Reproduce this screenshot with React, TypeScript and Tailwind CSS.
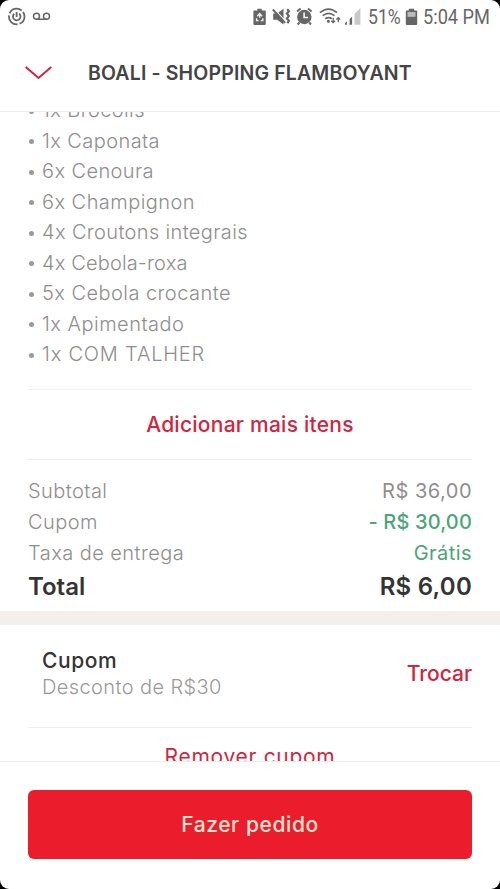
import type { ReactNode } from "react";

const items = [
  { label: "1x Brócolis", spacing: "tracking-[0.4px]" },
  { label: "1x Caponata", spacing: "tracking-[0.42px]" },
  { label: "6x Cenoura", spacing: "tracking-[0.4px]" },
  { label: "6x Champignon", spacing: "tracking-[0.45px]" },
  { label: "4x Croutons integrais", spacing: "tracking-[0.36px]" },
  { label: "4x Cebola-roxa", spacing: "tracking-[0.15px]" },
  { label: "5x Cebola crocante", spacing: "tracking-[0.45px]" },
  { label: "1x Apimentado", spacing: "tracking-[0.48px]" },
  { label: "1x COM TALHER", spacing: "tracking-[0.8px]" },
];

function StatusBar() {
  return (
    <div className="flex h-[34px] shrink-0 items-center text-[#666]">
      <svg width="60" height="34" viewBox="0 0 60 34" fill="none" stroke="#666">
        <circle cx="16.7" cy="16.5" r="7.8" strokeWidth="1.8" strokeDasharray="14.3 2" strokeDashoffset="5" />
        <path d="M14.2 13.7a3.8 3.8 0 1 0 5 0M16.6 12v5" strokeWidth="1.8" />
        <circle cx="36.5" cy="16.3" r="3" strokeWidth="1.5" />
        <circle cx="46.5" cy="16.3" r="3" strokeWidth="1.5" />
        <path d="M36.5 19.3h10" strokeWidth="1.5" />
      </svg>
      <svg className="ml-[190px] shrink-0" width="112" height="34" viewBox="250 0 112 34" fill="#666">
        {/* battery saver */}
        <path d="M257.3 8.8h4.4v1.7h3.3q.8 0 .8.8v12.8q0 .8-.8.8h-10.8q-.8 0-.8-.8V11.3q0-.8.8-.8h3.1z" />
        <path d="M257.3 16.3l2.4-2.8 2.4 2.8M256.6 18.2v2.4h2M262.8 18.2v2.4h-2M259.7 14.5v3.2" fill="none" stroke="#eee" strokeWidth="1.4" />
        {/* muted, vibrating */}
        <path d="M273.2 13.5h4l6.3-4.7v15.6l-6.3-4.6h-4z" />
        <path d="M273.5 8.5l12 12.6" stroke="#fff" strokeWidth="1.3" />
        <path d="M272.8 9.5l12.4 13.3" stroke="#666" strokeWidth="1.9" />
        <path d="M287.2 9.3l1.7 1.9-2 2.4 2 2.4-2 2.4 2 2.4-1.4 2.4" fill="none" stroke="#666" strokeWidth="2.2" />
        {/* alarm */}
        <circle cx="304.3" cy="17" r="7.2" />
        <path d="M297 11.4l3.6-3M308 8.4l3.6 3M299.5 22.5l-1.8 2M309.2 22.5l1.8 2" stroke="#666" strokeWidth="1.9" />
        <path d="M304.1 12.5v5h4" fill="none" stroke="#fff" strokeWidth="1.5" />
        {/* wifi */}
        <g fill="none" stroke="#666" strokeWidth="1.7">
          <path d="M320 12.7q8.5-7.3 17 0M322.7 15.7q5.8-4.7 11.8 0M325.3 18.8q3.2-2.4 6.5 0" />
          <path d="M333.2 17.8v4.5M331.3 20.7l1.9 1.9 1.9-1.9M338.3 22.3v-4.5M336.4 19.5l1.9-1.9 1.9 1.9" strokeWidth="1.3" />
        </g>
        <circle cx="328.4" cy="21.2" r="1.5" />
        {/* signal */}
        <path d="M345 23l1.9-1.4v3.1H345zM349.6 19l2.5-2.2v7.9h-2.5z" />
        <path d="M354.5 14l5.9-6v16.7h-5.9z" fill="#c8c8c8" />
      </svg>
      <span className="ml-[6px] w-[36px] origin-left scale-x-[0.88] font-[Roboto,sans-serif] text-[20px] leading-none">51%</span>
      <svg className="ml-[1px] shrink-0" width="13" height="34" viewBox="405 0 13 34" fill="#666">
        <path d="M408.8 8.7h5.3v1.8h2.3q.8 0 .8.8v12.8q0 .8-.8.8h-9.8q-.8 0-.8-.8V11.3q0-.8.8-.8h2.2z" />
        <path d="M407.5 12h8v4.8h-8z" fill="#bbb" />
      </svg>
      <span className="ml-[5px] origin-left scale-x-[0.91] whitespace-nowrap font-[Roboto,sans-serif] text-[20px] leading-none">5:04 PM</span>
    </div>
  );
}

function SummaryRow({ label, children }: { label: string; children: ReactNode }) {
  return (
    <div className="flex h-[31px] items-center justify-between text-[20px] font-light tracking-[0.45px] text-[#8f8e8d]">
      <span>{label}</span>
      {children}
    </div>
  );
}

export default function App() {
  return (
    <div className="h-[889px] w-[500px] bg-black">
      <div className="flex h-full flex-col overflow-hidden rounded-[9px] bg-white font-[Inter,sans-serif]">
        <StatusBar />
        <header className="flex h-[78px] shrink-0 items-center border-b border-[#eeede8] pl-[25px]">
          <svg width="27" height="14" viewBox="0 0 27 14" fill="none">
            <path d="M.7 1L13.5 12 26.3 1" stroke="#d02540" strokeWidth="2" />
          </svg>
          <h1 className="ml-[36px] mt-[2px] whitespace-nowrap text-[19.5px] font-semibold tracking-[0.15px] text-[#444]">
            BOALI - SHOPPING FLAMBOYANT
          </h1>
        </header>

        <main className="min-h-0 flex-1 overflow-hidden">
          <div className="px-7">
            <ul className="-mt-[17px] h-[294px] text-[20px] font-light leading-[30.5px] text-[#8f8e8d]">
              {items.map((item) => (
                <li key={item.label} className="flex items-center whitespace-nowrap">
                  <span className="ml-[1px] mr-[8px] mt-[2px] size-[5px] rounded-full bg-[#999]" />
                  <span className={item.spacing}>{item.label}</span>
                </li>
              ))}
            </ul>
            <button className="flex h-[71px] w-full items-center justify-center border-y border-[#eeeeed] pt-[1px] text-[21px] font-medium tracking-[0.25px] text-[#d02540]">
              Adicionar mais itens
            </button>
            <div className="h-[151px] pt-[15px]">
              <SummaryRow label="Subtotal">
                <span className="font-normal tracking-[0.5px]">R$ 36,00</span>
              </SummaryRow>
              <SummaryRow label="Cupom">
                <span className="font-medium tracking-[0.15px] text-[#4aa578]">- R$ 30,00</span>
              </SummaryRow>
              <SummaryRow label="Taxa de entrega">
                <span className="font-normal text-[#4aa578]">Grátis</span>
              </SummaryRow>
              <div className="flex h-[38px] items-center justify-between text-[24px] font-semibold text-[#343434]">
                <span>Total</span>
                <span className="tracking-[0.25px]">R$ 6,00</span>
              </div>
            </div>
          </div>

          <div className="h-[14px] bg-[#f5efeb]" />

          <div className="px-7">
            <div className="flex h-[103px] items-center justify-between border-b border-[#f0efed] pl-[14px]">
              <div className="-mt-[4px] text-[20px] leading-[26px]">
                <p className="text-[21px] font-medium tracking-[0.6px] text-[#343434]">Cupom</p>
                <p className="font-light tracking-[0.4px] text-[#999]">Desconto de R$30</p>
              </div>
              <button className="-mt-[5px] text-[21px] font-medium text-[#d02540]">Trocar</button>
            </div>
            <button className="flex h-[58px] w-full items-center justify-center text-[21px] tracking-[0.7px] text-[#d02540]">
              Remover cupom
            </button>
          </div>
        </main>

        <footer className="h-[128px] shrink-0 border-t border-[#eeede8] px-7 pt-[28px]">
          <button className="flex h-[69px] w-full items-center justify-center rounded-[6px] bg-[#eb1c2b] pt-[1px] text-[21px] font-medium tracking-[0.6px] text-[#ffe4d0]">
            Fazer pedido
          </button>
        </footer>
      </div>
    </div>
  );
}
